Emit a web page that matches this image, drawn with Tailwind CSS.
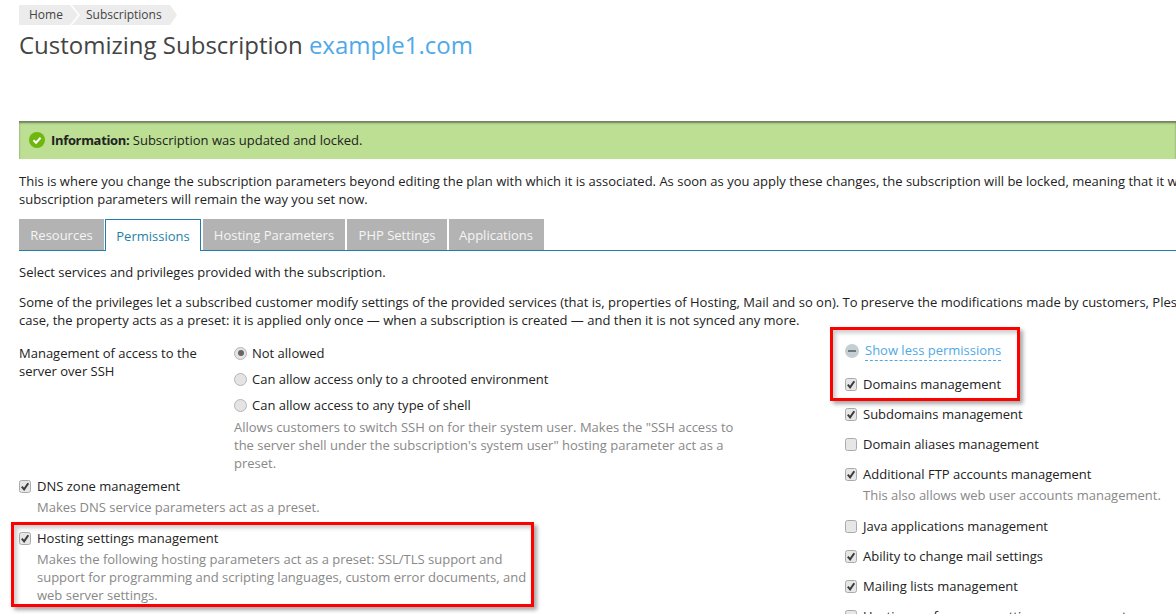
<!DOCTYPE html>
<html lang="en">
<head>
  <meta charset="UTF-8">
  <title>Customizing Subscription</title>
  <script src="https://cdn.jsdelivr.net/npm/@tailwindcss/browser@4"></script>
</head>
<body class="bg-white h-[614px] overflow-hidden font-['Open_Sans',sans-serif] text-[13px] leading-[18px] text-[#222]">
  <div class="relative w-[1176px] h-[614px] overflow-hidden pl-[19px]">

    <!-- breadcrumbs -->
    <div class="flex pt-[5px] h-[25px] text-[#444] text-[12px] leading-[20px]">
      <div class="w-[59px] h-[20px] pl-[10px] bg-[#ececec] [clip-path:polygon(0_0,51px_0,59px_50%,51px_100%,0_100%)]">Home</div>
      <div class="w-[105px] h-[20px] -ml-[6px] pl-[14px] bg-[#ececec] [clip-path:polygon(0_0,98px_0,105px_50%,98px_100%,0_100%,8px_50%)]">Subscriptions</div>
    </div>

    <h1 class="mt-[3px] h-[33px] text-[24px] leading-[33px] text-[#444] whitespace-nowrap">Customizing Subscription <span class="text-[#4fa9e8]">example1.com</span></h1>

    <!-- message -->
    <div class="mt-[60px] h-[38px] w-[1157px] bg-[#bcdf93] shadow-[inset_0_2px_2px_rgba(60,60,60,0.6)] flex items-center pl-[10px]">
      <svg class="w-[16px] h-[16px] mr-[6px] shrink-0" viewBox="0 0 16 16">
        <circle cx="8" cy="8" r="8" fill="#6fb70f"/>
        <path d="M4.5 8.2l2.5 2.5 4.6-4.9" fill="none" stroke="#fff" stroke-width="2"/>
      </svg>
      <p class="whitespace-nowrap"><b class="font-bold tracking-[-0.33px]">Information:</b> Subscription was updated and locked.</p>
    </div>

    <p class="mt-[13px] whitespace-nowrap">This is where you change the subscription parameters beyond editing the plan with which it is associated. As soon as you apply these changes, the subscription will be locked, meaning that it will not be synchronized with the plan and its<br>subscription parameters will remain the way you set now.</p>

    <!-- tabs -->
    <div class="mt-[11px] h-[32px] flex items-stretch gap-[2px] border-b border-[#1f7fa9] text-[#f5f5f5] w-[1157px]">
      <div class="w-[85px] mr-[-1px] bg-[#b3b3b3] text-center leading-[33px]">Resources</div>
      <div class="w-[96px] h-[32px] bg-white border border-b-0 border-[#1f7fa9] text-[#1f7fa9] text-center leading-[32px]">Permissions</div>
      <div class="w-[142px] bg-[#b3b3b3] text-center leading-[33px]">Hosting Parameters</div>
      <div class="w-[100px] bg-[#b3b3b3] text-center leading-[33px]">PHP Settings</div>
      <div class="w-[95px] bg-[#b3b3b3] text-center leading-[33px] pr-px">Applications</div>
    </div>

    <p class="mt-[12px]">Select services and privileges provided with the subscription.</p>
    <p class="mt-[12px] whitespace-nowrap">Some of the privileges let a subscribed customer modify settings of the provided services (that is, properties of Hosting, Mail and so on). To preserve the modifications made by customers, Plesk will not overwrite them. In this<br>case, the property acts as a preset: it is applied only once — when a subscription is created — and then it is not synced any more.</p>

    <div class="flex">
      <!-- left column -->
      <div class="w-[826px] shrink-0 pt-[15px]">
        <div class="flex">
          <div class="w-[215px] shrink-0 pr-[20px]">Management of access to the server over SSH</div>
          <div class="w-[515px]">
            <div class="flex items-center gap-[5px] h-[18px]">
              <span class="w-[13px] h-[13px] rounded-full border border-[#b5b5b5] bg-[#e4e4e4] flex items-center justify-center"><span class="w-[6px] h-[6px] rounded-full bg-[#666]"></span></span>
              Not allowed
            </div>
            <div class="flex items-center gap-[5px] h-[18px] mt-[8px]">
              <span class="w-[13px] h-[13px] rounded-full border border-[#b5b5b5] bg-[#e4e4e4]"></span>
              Can allow access only to a chrooted environment
            </div>
            <div class="flex items-center gap-[5px] h-[18px] mt-[8px]">
              <span class="w-[13px] h-[13px] rounded-full border border-[#b5b5b5] bg-[#e4e4e4]"></span>
              Can allow access to any type of shell
            </div>
            <p class="mt-[4px] text-[#888]">Allows customers to switch SSH on for their system user. Makes the "SSH access to the server shell under the subscription's system user" hosting parameter act as a preset.</p>
          </div>
        </div>

        <div class="mt-[5px] flex items-center gap-[6px] h-[18px]">
          <svg class="w-[12px] h-[13px] shrink-0" viewBox="0 0 12 13"><rect x=".5" y=".5" width="11" height="12" rx="2" fill="#e6e6e6" stroke="#aaa"/><path d="M2.8 6.6l2.3 2.7L9.3 3.2" fill="none" stroke="#3c3c3c" stroke-width="2"/></svg>
          DNS zone management
        </div>
        <p class="mt-[3px] ml-[18px] text-[#888]">Makes DNS service parameters act as a preset.</p>

        <div class="mt-[13px] flex items-center gap-[6px] h-[18px]">
          <svg class="w-[12px] h-[13px] shrink-0" viewBox="0 0 12 13"><rect x=".5" y=".5" width="11" height="12" rx="2" fill="#e6e6e6" stroke="#aaa"/><path d="M2.8 6.6l2.3 2.7L9.3 3.2" fill="none" stroke="#3c3c3c" stroke-width="2"/></svg>
          Hosting settings management
        </div>
        <p class="mt-[3px] ml-[18px] w-[495px] text-[#888]">Makes the following hosting parameters act as a preset: SSL/TLS support and support for programming and scripting languages, custom error documents, and web server settings.</p>
      </div>

      <!-- right column -->
      <div class="pt-[13px] whitespace-nowrap">
        <div class="flex items-center gap-[6px] h-[18px]">
          <span class="w-[14px] h-[14px] rounded-full bg-[#c5ced2] flex items-center justify-center"><span class="w-[8px] h-[2px] bg-[#6d7a80]"></span></span>
          <span class="text-[#4fa9e8] border-b border-dashed border-[#4fa9e8] leading-[19px]">Show less permissions</span>
        </div>
        <div class="mt-[15px] flex items-center gap-[6px] h-[18px]">
          <svg class="w-[12px] h-[13px] shrink-0" viewBox="0 0 12 13"><rect x=".5" y=".5" width="11" height="12" rx="2" fill="#e6e6e6" stroke="#aaa"/><path d="M2.8 6.6l2.3 2.7L9.3 3.2" fill="none" stroke="#3c3c3c" stroke-width="2"/></svg>
          Domains management
        </div>
        <div class="mt-[12px] flex items-center gap-[6px] h-[18px]">
          <svg class="w-[12px] h-[13px] shrink-0" viewBox="0 0 12 13"><rect x=".5" y=".5" width="11" height="12" rx="2" fill="#e6e6e6" stroke="#aaa"/><path d="M2.8 6.6l2.3 2.7L9.3 3.2" fill="none" stroke="#3c3c3c" stroke-width="2"/></svg>
          Subdomains management
        </div>
        <div class="mt-[12px] flex items-center gap-[6px] h-[18px]">
          <svg class="w-[12px] h-[13px] shrink-0" viewBox="0 0 12 13"><rect x=".5" y=".5" width="11" height="12" rx="2" fill="#e6e6e6" stroke="#aaa"/></svg>
          Domain aliases management
        </div>
        <div class="mt-[12px] flex items-center gap-[6px] h-[18px]">
          <svg class="w-[12px] h-[13px] shrink-0" viewBox="0 0 12 13"><rect x=".5" y=".5" width="11" height="12" rx="2" fill="#e6e6e6" stroke="#aaa"/><path d="M2.8 6.6l2.3 2.7L9.3 3.2" fill="none" stroke="#3c3c3c" stroke-width="2"/></svg>
          Additional FTP accounts management
        </div>
        <p class="mt-[3px] ml-[18px] text-[#888]">This also allows web user accounts management.</p>
        <div class="mt-[13px] flex items-center gap-[6px] h-[18px]">
          <svg class="w-[12px] h-[13px] shrink-0" viewBox="0 0 12 13"><rect x=".5" y=".5" width="11" height="12" rx="2" fill="#e6e6e6" stroke="#aaa"/></svg>
          Java applications management
        </div>
        <div class="mt-[12px] flex items-center gap-[6px] h-[18px]">
          <svg class="w-[12px] h-[13px] shrink-0" viewBox="0 0 12 13"><rect x=".5" y=".5" width="11" height="12" rx="2" fill="#e6e6e6" stroke="#aaa"/><path d="M2.8 6.6l2.3 2.7L9.3 3.2" fill="none" stroke="#3c3c3c" stroke-width="2"/></svg>
          Ability to change mail settings
        </div>
        <div class="mt-[12px] flex items-center gap-[6px] h-[18px]">
          <svg class="w-[12px] h-[13px] shrink-0" viewBox="0 0 12 13"><rect x=".5" y=".5" width="11" height="12" rx="2" fill="#e6e6e6" stroke="#aaa"/><path d="M2.8 6.6l2.3 2.7L9.3 3.2" fill="none" stroke="#3c3c3c" stroke-width="2"/></svg>
          Mailing lists management
        </div>
        <div class="mt-[12px] flex items-center gap-[6px] h-[18px]">
          <svg class="w-[12px] h-[13px] shrink-0" viewBox="0 0 12 13"><rect x=".5" y=".5" width="11" height="12" rx="2" fill="#e6e6e6" stroke="#aaa"/></svg>
          Hosting performance settings management
        </div>
      </div>
    </div>

    <!-- red annotation boxes drawn over the screenshot -->
    <div class="absolute left-[11px] top-[522px] w-[523px] h-[85px] border-[3px] border-[#f00] shadow-[3px_3px_4px_rgba(0,0,0,0.35),inset_3px_3px_4px_rgba(0,0,0,0.2)]"></div>
    <div class="absolute left-[830px] top-[327px] w-[190px] h-[74px] border-[3px] border-[#f00] shadow-[3px_3px_4px_rgba(0,0,0,0.35),inset_3px_3px_4px_rgba(0,0,0,0.2)]"></div>
  </div>
</body>
</html>
